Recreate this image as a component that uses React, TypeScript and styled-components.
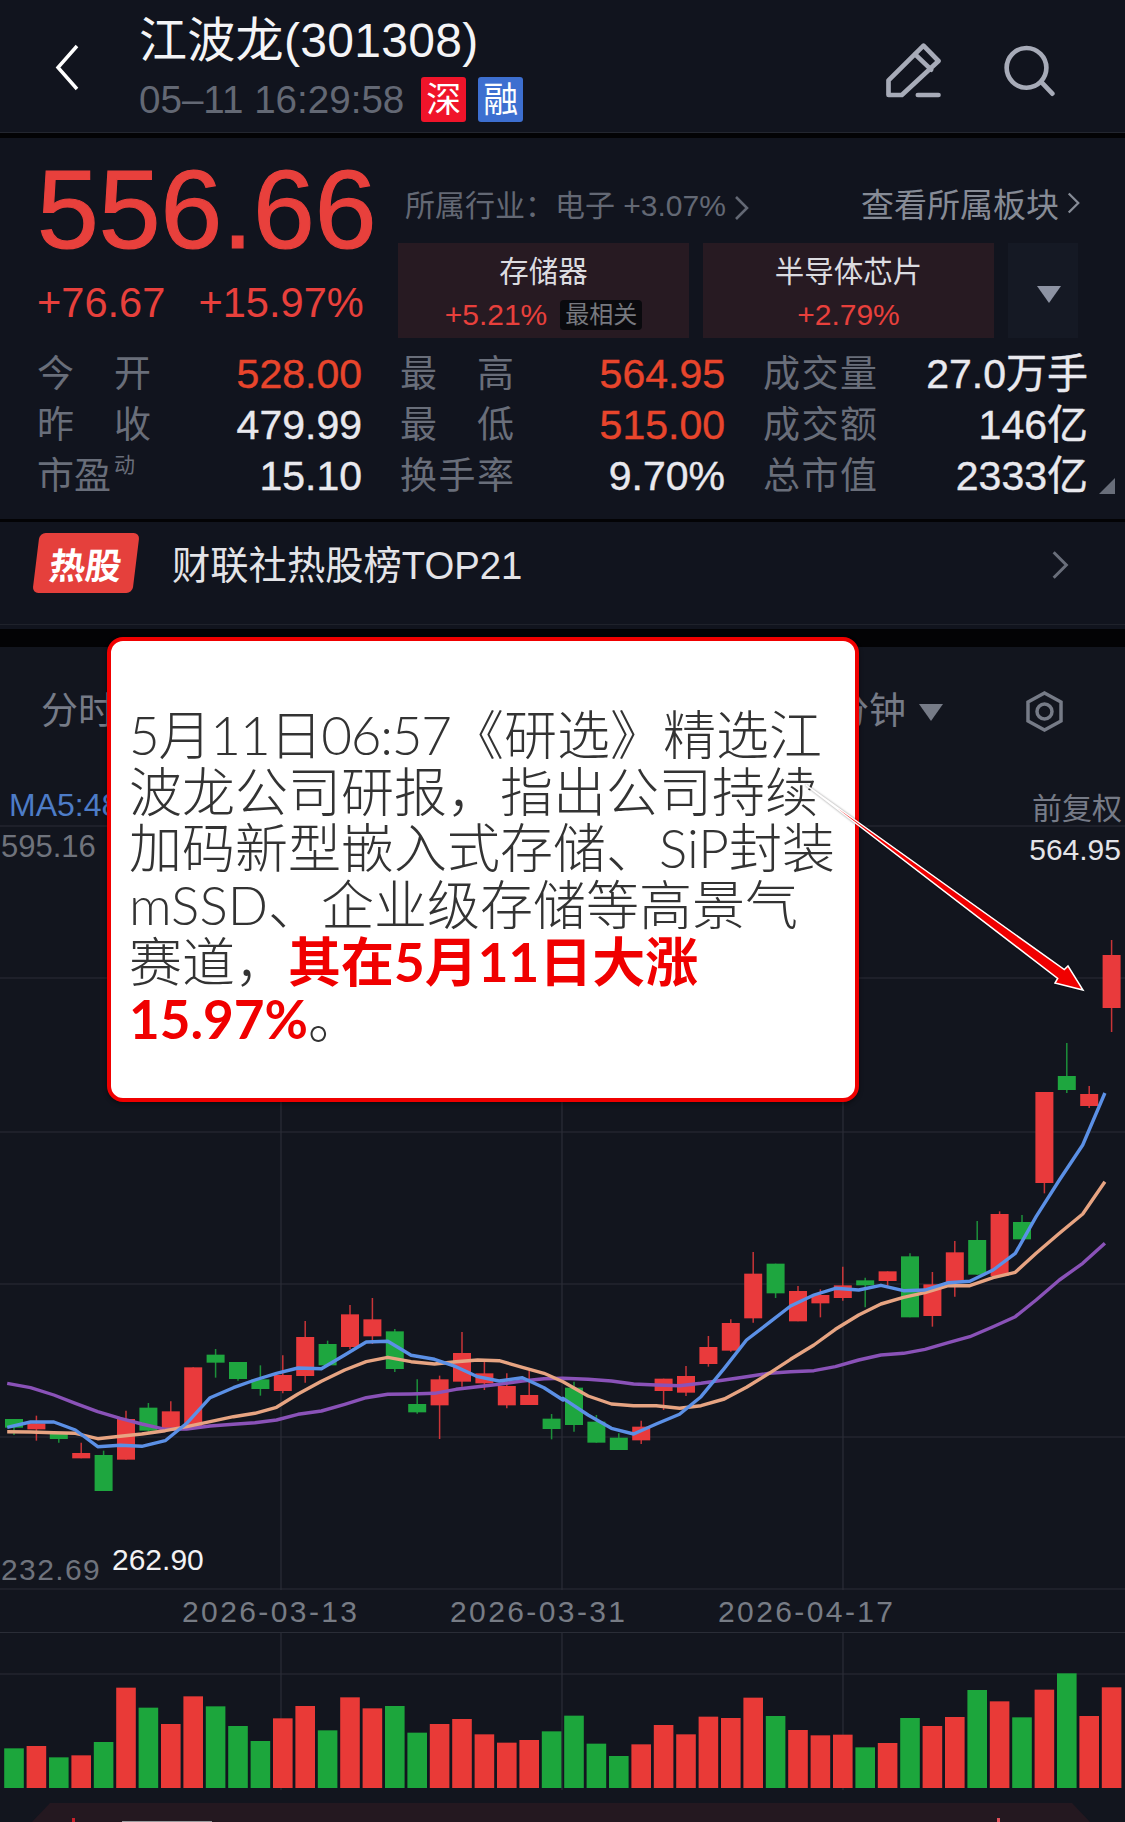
import styled, {createGlobalStyle} from "styled-components"

const sans = `"Liberation Sans", "Noto Sans CJK SC", sans-serif`
const RED = "#e8403c"
const GREEN = "#1ea63f"
const GRID = "#2a2d37"
const COMMA = "\uFF0C"
const COLON = "\uFF1A"

const GlobalStyle = createGlobalStyle`
html, body {
    margin: 0;
    padding: 0;
    background: #11141e;
}
`

// [bodyTop, bodyBottom, wickTop, wickBottom, up]  traced off the 3x crops, y = base + v / 3
const candlesA: [number, number, number, number, number][] = [
    [597, 623, 597, 645, 0], [610, 628, 587, 662, 1], [640, 657, 640, 668, 0], [699, 715, 668, 715, 1],
    [705, 813, 692, 813, 0], [597, 719, 572, 719, 1], [563, 632, 549, 635, 0], [574, 628, 544, 628, 1],
    [442, 620, 442, 620, 1], [404, 428, 387, 473, 0], [426, 477, 426, 482, 0], [478, 507, 436, 527, 0],
    [465, 513, 406, 520, 1], [351, 468, 303, 488, 1], [372, 436, 362, 436, 0], [283, 381, 255, 388, 1],
    [298, 349, 234, 372, 1], [334, 447, 327, 456, 0], [552, 577, 478, 581, 0], [478, 556, 467, 657, 1],
    [399, 485, 336, 500, 1], [460, 490, 425, 510, 1], [498, 556, 460, 565, 1], [525, 555, 452, 555, 1],
    [596, 627, 582, 658, 0],
]
const candlesB: [number, number, number, number, number][] = [
    [863, 975, 845, 995, 0], [965, 1028, 945, 1028, 0], [1013, 1050, 1000, 1050, 0], [980, 1021, 962, 1032, 1],
    [836, 873, 836, 930, 1], [828, 878, 798, 888, 1], [741, 792, 708, 800, 1], [669, 752, 658, 755, 1],
    [521, 655, 456, 668, 1], [491, 580, 491, 594, 0], [573, 664, 558, 664, 1], [585, 610, 568, 652, 1],
    [556, 594, 500, 602, 1], [541, 556, 533, 622, 0], [514, 543, 514, 562, 1], [469, 652, 460, 652, 0],
    [553, 648, 516, 680, 1], [457, 546, 423, 590, 1], [420, 524, 363, 524, 0], [342, 528, 334, 528, 1],
    [366, 418, 345, 418, 0], [-24, 249, -24, 280, 1], [-72, -30, -171, -21, 0], [-18, 18, -42, 24, 1],
    [-435, -276, -480, -204, 1],
]

const candles = [
    ...candlesA.map(c => ({top: 1220 + c[0] / 3, bottom: 1220 + c[1] / 3, high: 1220 + c[2] / 3, low: 1220 + c[3] / 3, up: !!c[4]})),
    ...candlesB.map(c => ({top: 1100 + c[0] / 3, bottom: 1100 + c[1] / 3, high: 1100 + c[2] / 3, low: 1100 + c[3] / 3, up: !!c[4]})),
]

const left = [20, 85, 150, 210, 272, 335, 395, 460, 520, 585, 650, 710, 770, 830, 895, 960, 1020, 1080, 1145, 1210, 1270, 1330, 1390, 1455, 1515, 1568]
const right = [0, 70, 135, 197, 260, 325, 385, 450, 512, 575, 635, 700, 760, 825, 887, 950, 1010, 1075, 1135, 1200, 1262, 1320, 1385, 1450, 1512]

function linePoints(a: number[], b: number[]) {
    const first = a.map((v, i) => `${(left[i] / 2.785).toFixed(1)},${(1220 + v / 3).toFixed(1)}`)
    const second = b.map((v, i) => `${(563 + right[i] / 2.79).toFixed(1)},${(1100 + v / 3).toFixed(1)}`)
    return [...first, ...second].join(" ")
}

const blue = linePoints(
    [622, 606, 606, 630, 680, 676, 679, 662, 610, 533, 503, 480, 460, 444, 446, 405, 366, 364, 406, 418, 440, 470, 483, 473, 503, 540],
    [895, 945, 985, 1002, 972, 943, 890, 805, 720, 668, 618, 585, 565, 570, 556, 572, 570, 548, 544, 510, 460, 350, 240, 135, -21]
)
const peach = linePoints(
    [635, 636, 638, 640, 656, 649, 642, 632, 620, 605, 590, 580, 562, 522, 484, 450, 425, 412, 425, 432, 425, 420, 422, 442, 460, 485],
    [845, 888, 912, 917, 917, 925, 917, 897, 862, 820, 778, 735, 688, 645, 612, 592, 578, 557, 557, 533, 517, 460, 400, 342, 245]
)
const purple = linePoints(
    [490, 503, 525, 550, 575, 595, 612, 628, 627, 618, 613, 608, 600, 583, 573, 553, 533, 523, 522, 520, 508, 500, 493, 483, 476, 475],
    [835, 838, 843, 852, 855, 857, 850, 840, 830, 820, 815, 812, 800, 780, 765, 760, 748, 728, 710, 680, 650, 600, 540, 490, 430]
)

// [top in 3x crop, up]
const volumes: [number, number][] = [
    [685, 0], [678, 1], [712, 0], [706, 1], [666, 0], [503, 1], [563, 0], [612, 1], [529, 1], [559, 0],
    [618, 0], [663, 0], [595, 1], [558, 1], [631, 0], [532, 1], [565, 1], [558, 0], [638, 0], [612, 1],
    [597, 1], [643, 1], [668, 1], [660, 1], [634, 0], [587, 0], [671, 0], [708, 0], [673, 1], [615, 1],
    [643, 1], [590, 1], [594, 1], [533, 1], [588, 0], [630, 1], [646, 1], [644, 1], [682, 0], [669, 1],
    [594, 0], [618, 1], [591, 1], [510, 0], [544, 1], [592, 0], [509, 1], [460, 0], [588, 1], [502, 1],
]

const stats = [
    [{label: "今开", value: "528.00", hot: true}, {label: "最高", value: "564.95", hot: true}, {label: "成交量", value: "27.0万手"}],
    [{label: "昨收", value: "479.99"}, {label: "最低", value: "515.00", hot: true}, {label: "成交额", value: "146亿"}],
    [{label: "市盈", sup: "动", value: "15.10"}, {label: "换手率", value: "9.70%"}, {label: "总市值", value: "2333亿"}],
]

const candleX = (i: number) => 14 + i * 22.4

function Chevron({w, h}: {w: number, h: number}) {
    return (
        <ChevronIcon width={w} height={h} viewBox="0 0 15 26">
            <path d="M2 2 L13 13 L2 24" />
        </ChevronIcon>
    )
}

export default function App() {
    return (
        <Page>
            <GlobalStyle />
            <Header>
                <BackIcon width="24" height="47" viewBox="0 0 24 47">
                    <path d="M22 2 L3 23.5 L22 45" />
                </BackIcon>
                <TitleBlock>
                    <Title>江波龙(301308)</Title>
                    <SubRow>
                        <Time>05–11 16:29:58</Time>
                        <Tag $color="#f0142a">深</Tag>
                        <Tag $color="#3d6fd0">融</Tag>
                    </SubRow>
                </TitleBlock>
                <HeaderIcons>
                    <HeaderIcon width="57" height="55" viewBox="80 70 170 165">
                        <path d="M90 182 L195 78 L240 124 L130 226 L90 226 Z" />
                        <path d="M170 104 L218 150" />
                        <path d="M178 226 L240 226" />
                    </HeaderIcon>
                    <HeaderIcon width="52" height="53" viewBox="430 75 155 160">
                        <circle cx="500" cy="147" r="60" />
                        <path d="M545 190 L578 225" />
                    </HeaderIcon>
                </HeaderIcons>
            </Header>
            <ThickBand $h={5} />

            <Quote>
                <QuoteTop>
                    <PriceBlock>
                        <Price>556.66</Price>
                        <Change>
                            <span>+76.67</span>
                            <span>+15.97%</span>
                        </Change>
                    </PriceBlock>
                    <Sector>
                        <InfoRow>
                            <Industry>所属行业{COLON}电子 +3.07% <Chevron w={15} h={26} /></Industry>
                            <BoardLink>查看所属板块<Chevron w={13} h={26} /></BoardLink>
                        </InfoRow>
                        <Chips>
                            <Chip>
                                <ChipName>存储器</ChipName>
                                <ChipRate>+5.21%<ChipBadge>最相关</ChipBadge></ChipRate>
                            </Chip>
                            <Chip>
                                <ChipName>半导体芯片</ChipName>
                                <ChipRate>+2.79%</ChipRate>
                            </Chip>
                            <MoreChip><MoreArrow /></MoreChip>
                        </Chips>
                    </Sector>
                </QuoteTop>
                <StatGrid>
                    {stats.flat().map(s => (
                        <Stat key={s.label}>
                            {s.sup
                                ? <StatLabel as="div" $plain>{s.label}<Sup>{s.sup}</Sup></StatLabel>
                                : <StatLabel>{s.label}</StatLabel>}
                            <StatValue $hot={s.hot}>{s.value}</StatValue>
                        </Stat>
                    ))}
                </StatGrid>
                <Corner />
            </Quote>
            <ThickBand $h={3} />

            <HotRow>
                <HotBadge><span>热股</span></HotBadge>
                <HotText>财联社热股榜TOP21</HotText>
                <HotChevron><Chevron w={18} h={30} /></HotChevron>
            </HotRow>
            <ThickBand $h={18} />

            <ChartArea>
                <Tabs>
                    <Tab>分时</Tab>
                    <TabRight>
                        <Tab>分钟</Tab>
                        <TabCaret />
                        <HexIcon width="37" height="41" viewBox="0 0 37 41">
                            <path d="M18.5 2 L35 11 L35 30 L18.5 39 L2 30 L2 11 Z" />
                            <circle cx="18.5" cy="20.5" r="7.5" />
                        </HexIcon>
                    </TabRight>
                </Tabs>
                <MaRow>
                    <MaText>MA5:488.21</MaText>
                    <Adjust>前复权</Adjust>
                </MaRow>
                <PriceChart>
                    <svg width="1125" height="765" viewBox="0 825 1125 765">
                        {[826, 978, 1132, 1284, 1437, 1589].map(y => (
                            <line key={y} x1="0" x2="1125" y1={y} y2={y} stroke={GRID} strokeWidth="1.2" />
                        ))}
                        {[281, 562, 843].map(x => (
                            <line key={x} x1={x} x2={x} y1="825" y2="1590" stroke={GRID} strokeWidth="1.2" />
                        ))}
                        {candles.map((c, i) => (
                            <g key={i} fill={c.up ? "#e93a3c" : GREEN} stroke={c.up ? "#e93a3c" : GREEN}>
                                <line x1={candleX(i)} x2={candleX(i)} y1={c.high} y2={c.low} strokeWidth="1.5" opacity="0.85" />
                                <rect x={candleX(i) - 9} y={c.top} width="18" height={c.bottom - c.top} stroke="none" />
                            </g>
                        ))}
                        <polyline points={purple} fill="none" stroke="#8a52b8" strokeWidth="3.4" strokeLinejoin="round" />
                        <polyline points={peach} fill="none" stroke="#e7a482" strokeWidth="3.4" strokeLinejoin="round" />
                        <polyline points={blue} fill="none" stroke="#5b90e6" strokeWidth="3.4" strokeLinejoin="round" />
                    </svg>
                    <HighLeft>595.16</HighLeft>
                    <HighRight>564.95</HighRight>
                    <LowLeft>232.69</LowLeft>
                    <LowMark>262.90</LowMark>
                </PriceChart>
                <DateAxis>
                    <DateLabel>2026-03-13</DateLabel>
                    <DateLabel>2026-03-31</DateLabel>
                    <DateLabel>2026-04-17</DateLabel>
                </DateAxis>
                <VolumeChart width="1125" height="158" viewBox="0 1632 1125 158">
                    {[1632.5, 1674].map(y => (
                        <line key={y} x1="0" x2="1125" y1={y} y2={y} stroke={GRID} strokeWidth="1.2" />
                    ))}
                    {[281, 562, 843].map(x => (
                        <line key={x} x1={x} x2={x} y1="1632" y2="1790" stroke={GRID} strokeWidth="1.2" />
                    ))}
                    {volumes.map(([top, up], i) => (
                        <rect
                            key={i}
                            x={candleX(i) - 9.8}
                            y={1520 + top / 3}
                            width="19.6"
                            height={1788 - (1520 + top / 3)}
                            fill={up ? "#e93a37" : "#1ca63c"}
                        />
                    ))}
                </VolumeChart>
                <BottomBand>
                    <Tick $color="#c8202a" $w={3} $ml={40} />
                    <Tick $color="#9a9a9e" $w={90} $ml={47} $h={1} />
                    <Tick $color="#e0505a" $w={3} $ml={785} />
                </BottomBand>
            </ChartArea>

            <Callout>
                <CalloutLine><TimeRun>5月11日06:57</TimeRun>《研选》精选江</CalloutLine>
                <CalloutLine>波龙公司研报{COMMA}指出公司持续</CalloutLine>
                <CalloutLine>加码新型嵌入式存储、SiP封装</CalloutLine>
                <CalloutLine>mSSD、企业级存储等高景气</CalloutLine>
                <CalloutLine>赛道{COMMA}<Strong>其在5月11日大涨</Strong></CalloutLine>
                <CalloutLine><Strong>15.97%</Strong>。</CalloutLine>
            </Callout>
            <ArrowOverlay width="1125" height="1822" viewBox="0 0 1125 1822">
                <polygon
                    points="806,785 1064.3,969.6 1068,966 1083,990 1055,983 1057.7,978.4"
                    fill="#f00000"
                    stroke="#fff"
                    strokeWidth="1.5"
                />
            </ArrowOverlay>
        </Page>
    )
}

const Page = styled.div`
position: relative;
width: 1125px;
height: 1822px;
overflow: hidden;
background: #11141e;
font-family: ${sans};
`

const ThickBand = styled.div<{$h: number}>`
height: ${p => p.$h}px;
background: #030305;
`

const Header = styled.header`
height: 133px;
box-sizing: border-box;
padding-left: 55px;
padding-right: 70px;
display: flex;
align-items: center;
border-bottom: 1px solid #23262f;
`

const BackIcon = styled.svg`
fill: none;
stroke: #fff;
stroke-width: 3.5;
margin-top: 2px;
flex: none;
`

const TitleBlock = styled.div`
margin-left: 60px;
display: flex;
flex-direction: column;
gap: 9px;
margin-top: 3px;
`

const Title = styled.div`
font-size: 48px;
line-height: 54px;
letter-spacing: 0.3px;
color: #f4f4f6;
`

const SubRow = styled.div`
display: flex;
align-items: center;
`

const Time = styled.div`
font-size: 38.6px;
line-height: 45px;
color: #636874;
margin-right: 17px;
`

const Tag = styled.div<{$color: string}>`
width: 45px;
height: 45px;
margin-right: 12px;
border-radius: 3px;
background: ${p => p.$color};
color: #fff;
font-size: 35px;
line-height: 45px;
text-align: center;
`

const HeaderIcons = styled.div`
margin-left: auto;
margin-top: 8px;
display: flex;
align-items: center;
gap: 61px;
`

const HeaderIcon = styled.svg`
fill: none;
stroke: #a7abb8;
stroke-width: 14;
stroke-linecap: round;
stroke-linejoin: round;
`

const ChevronIcon = styled.svg`
fill: none;
stroke: currentColor;
stroke-width: 2.6;
vertical-align: middle;
flex: none;
`

const Quote = styled.section`
position: relative;
height: 381px;
box-sizing: border-box;
padding-top: 20px;
`

const QuoteTop = styled.div`
display: flex;
height: 180px;
`

const PriceBlock = styled.div`
width: 398px;
padding-left: 37px;
box-sizing: border-box;
flex: none;
`

const Price = styled.div`
font-size: 111px;
line-height: 100px;
margin-top: 2px;
color: ${RED};
white-space: nowrap;
-webkit-text-stroke: 1.2px ${RED};
`

const Change = styled.div`
display: flex;
gap: 33px;
font-size: 41.6px;
line-height: 48px;
margin-top: 19px;
color: ${RED};
`

const Sector = styled.div`
width: 682px;
flex: none;
`

const InfoRow = styled.div`
display: flex;
justify-content: space-between;
align-items: center;
height: 85px;
padding-left: 7px;
box-sizing: border-box;
padding-top: 30px;
padding-bottom: 26px;
`

const Industry = styled.div`
font-size: 30px;
color: #636874;
`

const BoardLink = styled.div`
font-size: 33px;
color: #868b96;
display: flex;
align-items: center;
gap: 8px;
`

const Chips = styled.div`
display: grid;
grid-template-columns: 291px 291px 70px;
gap: 14px;
height: 95px;
`

const Chip = styled.div`
background: #271a22;
display: flex;
flex-direction: column;
align-items: center;
padding-top: 12px;
box-sizing: border-box;
`

const ChipName = styled.div`
font-size: 29.5px;
line-height: 34px;
color: #dcdce0;
`

const ChipRate = styled.div`
display: flex;
align-items: center;
gap: 13px;
margin-top: 10px;
font-size: 30px;
line-height: 32px;
color: ${RED};
`

const ChipBadge = styled.span`
background: #0a0a0e;
color: #77797f;
font-size: 24px;
line-height: 30px;
padding: 0 5px;
border-radius: 4px;
`

const MoreChip = styled.div`
background: #151924;
display: flex;
align-items: center;
justify-content: center;
`

const MoreArrow = styled.div`
width: 0;
height: 0;
margin-left: 12px;
margin-top: 8px;
border-left: 12px solid transparent;
border-right: 12px solid transparent;
border-top: 17px solid #8d93a3;
`

const StatGrid = styled.div`
display: grid;
grid-template-columns: 325px 325px 325px;
column-gap: 38px;
padding-left: 37px;
margin-top: 11px;
`

const Stat = styled.div`
display: flex;
justify-content: space-between;
align-items: center;
height: 51px;
`

const StatLabel = styled.span<{$plain?: boolean}>`
position: relative;
display: block;
width: 114px;
font-size: 37px;
line-height: 51px;
color: #696e7a;
text-align-last: ${p => p.$plain ? "left" : "justify"};
`

const Sup = styled.span`
position: absolute;
left: 77px;
top: 2px;
font-size: 21px;
line-height: 24px;
`

const StatValue = styled.span<{$hot?: boolean}>`
font-size: 41px;
line-height: 51px;
color: ${p => p.$hot ? "#e8452c" : "#e9e9ee"};
white-space: nowrap;
-webkit-text-stroke: 0.4px currentColor;
`

const Corner = styled.div`
position: absolute;
right: 10px;
top: 340px;
width: 0;
height: 0;
border-left: 16px solid transparent;
border-bottom: 16px solid #696e7a;
`

const HotRow = styled.section`
height: 103px;
display: flex;
align-items: center;
padding-left: 36px;
padding-bottom: 24px;
box-sizing: border-box;
border-bottom: 1px solid #1f222b;
margin-bottom: 4px;
`

const HotBadge = styled.div`
width: 100px;
height: 60px;
margin-top: 4px;
background: #e5403c;
border-radius: 6px;
transform: skewX(-7deg);
display: flex;
align-items: center;
justify-content: center;
color: #fff;
font-size: 36px;
font-weight: 700;
flex: none;
`

const HotText = styled.div`
margin-left: 36px;
margin-top: 3px;
font-size: 38.3px;
color: #e4e4e8;
`

const HotChevron = styled.div`
margin-left: auto;
margin-right: 56px;
margin-top: 7px;
color: #696e7a;
display: flex;
`

const ChartArea = styled.section`
background: #12151e;
`

const Tabs = styled.div`
height: 143px;
display: flex;
justify-content: space-between;
align-items: flex-start;
padding: 40px 62px 0 41px;
box-sizing: border-box;
`

const TabRight = styled.div`
display: flex;
align-items: center;
`

const Tab = styled.div`
font-size: 37px;
line-height: 50px;
color: #767b87;
`

const TabCaret = styled.div`
width: 0;
height: 0;
margin-left: 13px;
border-left: 12px solid transparent;
border-right: 12px solid transparent;
border-top: 17px solid #767b87;
`

const HexIcon = styled.svg`
fill: none;
stroke: #767b87;
stroke-width: 3.5;
margin-left: 83px;
margin-top: -2px;
`

const MaRow = styled.div`
height: 35px;
display: flex;
justify-content: space-between;
align-items: center;
padding: 0 3px 0 9px;
margin-top: -2px;
margin-bottom: 2px;
`

const MaText = styled.div`
font-size: 32px;
color: #4d7cc7;
`

const Adjust = styled.div`
font-size: 30px;
color: #767b87;
`

const PriceChart = styled.div`
position: relative;
height: 765px;
svg {
    display: block;
}
`

const ChartLabel = styled.div`
position: absolute;
font-size: 30px;
line-height: 32px;
color: #6f737c;
`

const HighLeft = styled(ChartLabel)`
left: 1px;
top: 6px;
font-size: 31px;
`

const HighRight = styled(ChartLabel)`
right: 4px;
top: 9px;
color: #e4e4e8;
`

const LowLeft = styled(ChartLabel)`
left: 1px;
top: 729px;
letter-spacing: 1.4px;
`

const LowMark = styled(ChartLabel)`
left: 112px;
top: 719px;
color: #f2f2f4;
`

const DateAxis = styled.div`
height: 42px;
display: flex;
align-items: center;
gap: 95px;
padding-left: 182px;
padding-top: 1px;
box-sizing: border-box;
`

const DateLabel = styled.div`
width: 173px;
font-size: 30px;
letter-spacing: 2.4px;
color: #777c85;
white-space: nowrap;
`

const VolumeChart = styled.svg`
display: block;
`

const BottomBand = styled.div`
height: 19px;
margin: 13px 35px 0 32px;
background: #241820;
clip-path: polygon(18px 0, calc(100% - 18px) 0, 100% 100%, 0 100%);
display: flex;
align-items: flex-end;
box-sizing: border-box;
`

const Tick = styled.div<{$color: string, $w: number, $ml: number, $h?: number}>`
width: ${p => p.$w}px;
height: ${p => p.$h ?? 4}px;
margin-left: ${p => p.$ml}px;
background: ${p => p.$color};
flex: none;
`

const Callout = styled.div`
position: absolute;
left: 107px;
top: 637px;
width: 752px;
height: 465px;
box-sizing: border-box;
padding: 66px 0 0 18px;
background: #fff;
border: 4px solid #f00000;
border-radius: 16px;
box-shadow: 0 2px 4px rgba(0, 0, 0, 0.4);
font-family: Lato, "Noto Sans CJK SC", sans-serif;
font-weight: 300;
font-size: 53px;
color: #333;
`

const CalloutLine = styled.div`
line-height: 56.7px;
white-space: nowrap;
`

const TimeRun = styled.span`
letter-spacing: -1.2px;
`

const Strong = styled.span`
color: #f00000;
font-weight: 700;
`

const ArrowOverlay = styled.svg`
position: absolute;
left: 0;
top: 0;
pointer-events: none;
filter: drop-shadow(0 0 1px rgba(0, 0, 0, 0.45));
`
